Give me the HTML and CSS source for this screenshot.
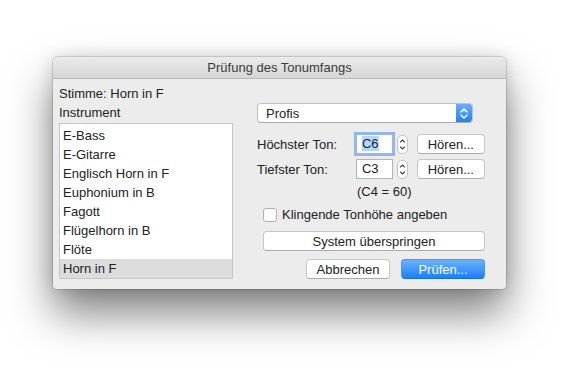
FILE: index.html
```html
<!DOCTYPE html>
<html lang="de">
<head>
    <meta charset="UTF-8">
    <title>Prüfung des Tonumfangs</title>
    <link rel="stylesheet" href="styles.css">
</head>
<body>
    <div class="window">
        <div class="titlebar">Prüfung des Tonumfangs</div>
        <div class="content">
            <div class="left">
                <div class="caption">Stimme: Horn in F</div>
                <div class="caption">Instrument</div>
                <ul class="list">
                    <li>E-Bass</li>
                    <li>E-Gitarre</li>
                    <li>Englisch Horn in F</li>
                    <li>Euphonium in B</li>
                    <li>Fagott</li>
                    <li>Flügelhorn in B</li>
                    <li>Flöte</li>
                    <li class="selected">Horn in F</li>
                </ul>
            </div>
            <div class="right">
                <div class="popup">
                    <span class="popup-label">Profis</span>
                    <span class="popup-arrows">
                        <svg width="16" height="19" viewBox="0 0 16 19"><path d="M5 8 L8 5 L11 8 M5 11 L8 14 L11 11" fill="none" stroke="#fff" stroke-width="1.5" stroke-linecap="round" stroke-linejoin="round"/></svg>
                    </span>
                </div>
                <div class="row first">
                    <span class="row-label">Höchster Ton:</span>
                    <div class="field focused"><span class="sel">C6</span></div>
                    <div class="stepper">
                        <svg width="11" height="19" viewBox="0 0 11 19"><path d="M3.5 7 L5.5 5 L7.5 7 M3.5 12 L5.5 14 L7.5 12" fill="none" stroke="#444" stroke-width="1.1" stroke-linecap="round" stroke-linejoin="round"/></svg>
                    </div>
                    <button class="btn listen">Hören...</button>
                </div>
                <div class="row">
                    <span class="row-label">Tiefster Ton:</span>
                    <div class="field">C3</div>
                    <div class="stepper">
                        <svg width="11" height="19" viewBox="0 0 11 19"><path d="M3.5 7 L5.5 5 L7.5 7 M3.5 12 L5.5 14 L7.5 12" fill="none" stroke="#444" stroke-width="1.1" stroke-linecap="round" stroke-linejoin="round"/></svg>
                    </div>
                    <button class="btn listen">Hören...</button>
                </div>
                <div class="note">(C4 = 60)</div>
                <label class="check"><span class="box"></span>Klingende Tonhöhe angeben</label>
                <button class="btn wide">System überspringen</button>
                <div class="actions">
                    <button class="btn">Abbrechen</button>
                    <button class="btn primary">Prüfen...</button>
                </div>
            </div>
        </div>
    </div>
</body>
</html>
```

FILE: styles.css
```css
html {
    height: 100%;
    background: #fff;
}
body {
    margin: 0;
    min-height: 100%;
    box-sizing: border-box;
    padding: 57px 0 0 53px;
    font-family: "Liberation Sans", Arial, sans-serif;
    font-size: 13px;
    color: #222;
}
.window {
    width: 453px;
    background: #ececec;
    border-radius: 5px 5px 4px 4px;
    box-shadow: 0 24px 44px rgba(0,0,0,0.5), 0 0 0 1px rgba(0,0,0,0.12), 0 0 16px rgba(0,0,0,0.14);
    overflow: hidden;
}
.titlebar {
    height: 21px;
    line-height: 22px;
    text-align: center;
    background: linear-gradient(#ebebeb, #d6d6d6);
    border-bottom: 1px solid #b9b9b9;
    color: #3a3a3a;
}
.content {
    display: flex;
    gap: 24px;
    padding: 5px 21px 10px 6px;
}
.left {
    width: 174px;
}
.caption {
    line-height: 19px;
}
.list {
    list-style: none;
    margin: 1px 0 0;
    padding: 2px 0 0;
    height: 152px;
    background: #fff;
    border: 1px solid #c6c6c6;
}
.list li {
    height: 19px;
    line-height: 19px;
    padding-left: 3px;
}
.list li.selected {
    background: #dcdcdc;
}
.right {
    width: 228px;
    display: flex;
    flex-direction: column;
}
.popup {
    margin-top: 19px;
    width: 214px;
    height: 18px;
    display: flex;
    align-items: center;
    background: #fff;
    border: 1px solid #c2c2c2;
    border-bottom-color: #aaa;
    border-radius: 4px;
    overflow: hidden;
}
.popup-label {
    flex: 1;
    padding-left: 8px;
}
.popup-arrows {
    width: 16px;
    height: 19px;
    display: flex;
    background: linear-gradient(#6aaefa, #1d7ff9);
}
.row {
    display: flex;
    align-items: center;
    margin-top: 5px;
    height: 20px;
}
.row.first {
    margin-top: 11px;
}
.row-label {
    width: 100px;
}
.field {
    width: 30px;
    height: 18px;
    line-height: 18px;
    padding-left: 5px;
    background: #fff;
    border: 1px solid #b3b3b3;
}
.field.focused {
    border-color: #9ab8e0;
    box-shadow: 0 0 0 2px #8fb7ef;
}
.sel {
    background: #b3d7ff;
}
.stepper {
    margin-left: 4px;
    width: 11px;
    height: 19px;
    box-sizing: border-box;
    background: #fff;
    border: 1px solid #c3c3c3;
    border-radius: 5px;
    display: flex;
    align-items: center;
    justify-content: center;
}
.stepper svg {
    flex: none;
}
.btn {
    font-family: inherit;
    font-size: 13px;
    color: #222;
    height: 20px;
    padding: 0;
    background: #fff;
    border: 1px solid #c6c6c6;
    border-bottom-color: #acacac;
    border-radius: 4px;
}
.listen {
    margin-left: 9px;
    width: 69px;
}
.note {
    margin: 5px 0 0 100px;
    line-height: 16px;
}
.check {
    display: flex;
    align-items: center;
    gap: 5px;
    margin: 7px 0 0 6px;
    line-height: 16px;
}
.box {
    width: 12px;
    height: 12px;
    background: #fff;
    border: 1px solid #b0b0b0;
    border-radius: 3px;
}
.wide {
    margin: 8px 0 0 6px;
    width: 222px;
    height: 20px;
}
.actions {
    display: flex;
    justify-content: flex-end;
    gap: 11px;
    margin-top: 8px;
}
.actions .btn {
    width: 84px;
}
.btn.primary {
    color: #fff;
    background: linear-gradient(#6cb1fb, #1c80fa);
    border-color: #4a95f5;
    border-bottom-color: #1a6fe0;
}
```
